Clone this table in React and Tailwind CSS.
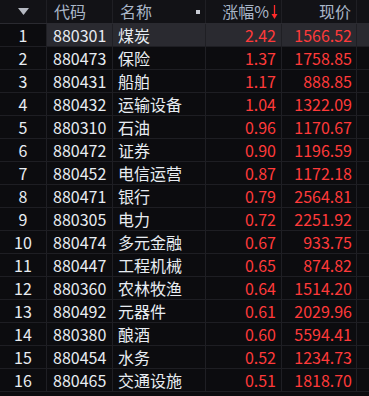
const rows = [
  ['880301', '煤炭', '2.42', '1566.52'],
  ['880473', '保险', '1.37', '1758.85'],
  ['880431', '船舶', '1.17', '888.85'],
  ['880432', '运输设备', '1.04', '1322.09'],
  ['880310', '石油', '0.96', '1170.67'],
  ['880472', '证券', '0.90', '1196.59'],
  ['880452', '电信运营', '0.87', '1172.18'],
  ['880471', '银行', '0.79', '2564.81'],
  ['880305', '电力', '0.72', '2251.92'],
  ['880474', '多元金融', '0.67', '933.75'],
  ['880447', '工程机械', '0.65', '874.82'],
  ['880360', '农林牧渔', '0.64', '1514.20'],
  ['880492', '元器件', '0.61', '2029.96'],
  ['880380', '酿酒', '0.60', '5594.41'],
  ['880454', '水务', '0.52', '1234.73'],
  ['880465', '交通设施', '0.51', '1818.70'],
];

export default function App() {
  return (
    <div
      className="w-[369px] h-[396px] bg-[#0c0c0f] overflow-hidden text-[16px]"
      style={{ fontFamily: '"Noto Sans CJK SC", "Noto Sans", sans-serif' }}
    >
      {/* header */}
      <div className="flex h-6 bg-[#121216] border-b border-[#2a2a30] text-[#a9b6c8] leading-[23px]">
        <div className="w-[47px] border-r border-[#1f1f24] flex justify-center items-center">
          <svg width="11" height="7" viewBox="0 0 11 7"><path d="M0 0h11L5.5 7z" fill="#b5b9c2" /></svg>
        </div>
        <div className="w-[66px] border-r border-[#1f1f24] pl-[7px]">代码</div>
        <div className="w-[93px] border-r border-[#1f1f24] pl-[7px] flex items-center justify-between pr-[4px]">
          <span>名称</span>
          <span className="w-[4px] h-[4px] bg-[#c8ccd4] mr-[1px]" />
        </div>
        <div className="w-[76px] border-r border-[#1f1f24] flex justify-end items-center pr-[2px]">
          <span>涨幅%</span>
          <svg width="9" height="16" viewBox="0 0 9 16" className="ml-[1px]">
            <path d="M4.5 1v10" stroke="#ff2a2a" strokeWidth="1.3" />
            <path d="M1.5 10h6L4.5 15z" fill="#ff2a2a" />
          </svg>
        </div>
        <div className="w-[75px] border-r border-[#1f1f24] text-right pr-[5px]">现价</div>
        <div className="flex-1" />
      </div>
      {rows.map((r, i) => (
        <div key={i} className="flex h-[23px] border-b border-[#1e1e23] leading-[22px]">
          <div className="w-[47px] border-r border-[#1f1f24] text-center text-[#e8ecf2] shrink-0">{i + 1}</div>
          <div className={`flex flex-1 ${i === 0 ? 'bg-[#2a2a30]' : ''}`}>
            <div className="w-[66px] border-r border-[#1f1f24] pl-[6px] text-[#e8ecf2]">{r[0]}</div>
            <div className="w-[93px] border-r border-[#1f1f24] pl-[5px] text-[#e8ecf2]">{r[1]}</div>
            <div className="w-[76px] border-r border-[#1f1f24] text-right pr-[5px] text-[#ff3a3a]">{r[2]}</div>
            <div className="w-[75px] border-r border-[#1f1f24] text-right pr-[4px] text-[#ff3a3a]">{r[3]}</div>
            <div className="flex-1" />
          </div>
        </div>
      ))}
    </div>
  );
}
